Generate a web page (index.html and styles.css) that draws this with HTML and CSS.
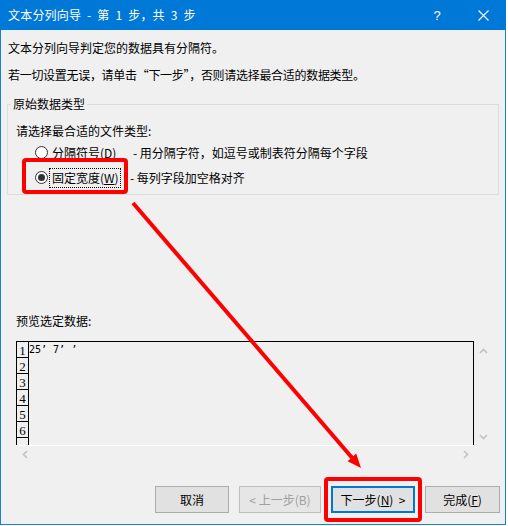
FILE: index.html
```html
<!DOCTYPE html>
<html lang="zh-CN">
<head>
<meta charset="utf-8">
<title>文本分列向导</title>
<link rel="stylesheet" href="styles.css">
</head>
<body>
<div class="window">
  <div class="titlebar">
    <span class="title">文本分列向导 - 第 1 步，共 3 步</span>
    <span class="tb-btn tb-help">?</span>
    <span class="tb-btn tb-close"><svg width="11" height="11" viewBox="0 0 11 11"><path d="M0.5 0.5L10.5 10.5M10.5 0.5L0.5 10.5" stroke="#fff" stroke-width="1.1" fill="none"/></svg></span>
  </div>
  <div class="content">
    <p class="line l1">文本分列向导判定您的数据具有分隔符。</p>
    <p class="line l2">若一切设置无误，请单击“下一步”，否则请选择最合适的数据类型。</p>
    <fieldset class="group">
      <legend>原始数据类型</legend>
      <div class="prompt">请选择最合适的文件类型:</div>
      <div class="radio-row">
        <span class="radio"></span>
        <span class="rlabel r1">分隔符号(D)</span>
        <span class="desc">- 用分隔字符，如逗号或制表符分隔每个字段</span>
      </div>
      <div class="radio-row">
        <span class="radio checked"></span>
        <span class="rlabel r2">固定宽度(<u>W</u>)</span>
        <span class="desc d2">- 每列字段加空格对齐</span>
      </div>
    </fieldset>
    <div class="preview-label">预览选定数据:</div>
    <div class="preview">
      <div class="data">
        <div class="row"><span class="num">1</span><span class="cell">25’ 7’ ’</span></div>
        <div class="row"><span class="num">2</span><span class="cell"></span></div>
        <div class="row"><span class="num">3</span><span class="cell"></span></div>
        <div class="row"><span class="num">4</span><span class="cell"></span></div>
        <div class="row"><span class="num">5</span><span class="cell"></span></div>
        <div class="row"><span class="num">6</span><span class="cell"></span></div>
        <div class="row"><span class="num"></span><span class="cell"></span></div>
      </div>
      <div class="vscroll">
        <svg width="9" height="6" viewBox="0 0 9 6"><path d="M1 5L4.5 1.5L8 5" stroke="#c2c2c2" stroke-width="1.6" fill="none"/></svg>
        <svg width="9" height="6" viewBox="0 0 9 6"><path d="M1 1L4.5 4.5L8 1" stroke="#c2c2c2" stroke-width="1.6" fill="none"/></svg>
      </div>
      <div class="hscroll">
        <svg width="6" height="9" viewBox="0 0 6 9"><path d="M5 1L1.5 4.5L5 8" stroke="#c2c2c2" stroke-width="1.6" fill="none"/></svg>
        <svg width="6" height="9" viewBox="0 0 6 9"><path d="M1 1L4.5 4.5L1 8" stroke="#c2c2c2" stroke-width="1.6" fill="none"/></svg>
      </div>
      <div class="corner"></div>
    </div>
    <div class="buttons">
      <button class="btn b-cancel">取消</button>
      <button class="btn b-prev" disabled>&lt; 上一步(B)</button>
      <button class="btn b-next default">下一步(<u>N</u>)&nbsp; &gt;</button>
      <button class="btn b-finish">完成(<u>F</u>)</button>
    </div>
  </div>
  <svg class="annot" width="508" height="526" viewBox="0 0 508 526">
    <rect x="24" y="160" width="102" height="32" rx="2" fill="none" stroke="#f00" stroke-width="4"/>
    <rect x="326" y="479" width="94" height="41" rx="2" fill="none" stroke="#f00" stroke-width="4"/>
    <line x1="133" y1="203" x2="354" y2="460" stroke="#f00" stroke-width="4"/>
    <polygon points="361,468 347.6,461.2 356.2,453.6" fill="#f00"/>
  </svg>
</div>
</body>
</html>
```

FILE: styles.css
```css
* { box-sizing: border-box; }
html, body { margin: 0; padding: 0; background: #ffffff; }
body {
  width: 508px;
  height: 526px;
  font-family: "Noto Sans CJK SC", "Microsoft YaHei", sans-serif;
  font-size: 12px;
  color: #000;
}
.window {
  position: relative;
  width: 506px;
  height: 525px;
  background: #f0f0f0;
  border: 1px solid #1a7fd4;
  border-top: none;
}
.titlebar {
  height: 30px;
  margin: 0 -1px;
  background: #0078d7;
  color: #fff;
  display: flex;
  align-items: center;
  padding-left: 8px;
}
.title { flex: 1; line-height: 16px; font-size: 12px; word-spacing: 3px; letter-spacing: 0.2px; }
.tb-btn {
  width: 46px;
  height: 30px;
  display: flex;
  align-items: center;
  justify-content: center;
}
.tb-help { font-family: "Liberation Sans", sans-serif; font-size: 13px; }
.tb-close svg { display: block; }

.content { display: flex; flex-direction: column; }
.line { margin: 0; padding-left: 7px; line-height: 16px; height: 16px; white-space: nowrap; }
.l1 { margin-top: 10px; }
.l2 { margin-top: 11px; letter-spacing: -0.3px; }

.group {
  margin: 13px 6px 0 6px;
  padding: 0 0 4px 0;
  border: 1px solid #dcdcdc;
  min-width: 0;
}
.group legend {
  margin-left: 3px;
  padding: 0 2px;
  line-height: 16px;
  height: 16px;
}
.prompt { margin-top: 11px; padding-left: 8px; line-height: 16px; height: 16px; }
.radio-row {
  height: 25px;
  display: flex;
  align-items: center;
  padding-left: 27px;
  white-space: nowrap;
}
.prompt + .radio-row { margin-top: 1px; }
.radio {
  width: 13px;
  height: 13px;
  border: 1px solid #333;
  border-radius: 50%;
  background: #fff;
  display: flex;
  align-items: center;
  justify-content: center;
  flex: none;
}
.radio.checked::after {
  content: "";
  width: 7px;
  height: 7px;
  border-radius: 50%;
  background: #333;
}
.rlabel { line-height: 16px; }
.r1 { margin-left: 4px; width: 81px; }
.r2 {
  margin-left: 2px;
  padding: 1px 2px;
  outline: 1px dotted #000;
  outline-offset: 0;
  width: 70px;
}
.desc { line-height: 16px; }
.d2 { margin-left: 10px; }

.preview-label { margin-top: 118px; padding-left: 15px; line-height: 16px; height: 16px; }
.preview {
  margin-top: 12px;
  margin-left: 15px;
  width: 481px;
  height: 121px;
  display: grid;
  grid-template-columns: 458px 23px;
  grid-template-rows: 104px 17px;
}
.data {
  border: 1px solid #000;
  border-bottom: none;
  overflow: hidden;
  display: flex;
  flex-direction: column;
}
.row { display: flex; height: 16px; flex: none; }
.num {
  width: 12px;
  height: 16px;
  border-right: 1px solid #000;
  border-bottom: 1px solid #000;
  font-family: "Liberation Serif", serif;
  font-size: 13px;
  line-height: 17px;
  text-align: center;
  flex: none;
}
.cell {
  font-family: "DejaVu Sans Mono", monospace;
  font-size: 10px;
  line-height: 13px;
  padding-top: 1px;
  white-space: pre;
}
.vscroll {
  display: flex;
  flex-direction: column;
  justify-content: space-between;
  align-items: center;
  padding: 7px 5px 5px 0;
}
.vscroll svg, .hscroll svg { display: block; }
.hscroll {
  border-top: 1px solid #fff;
  display: flex;
  justify-content: space-between;
  align-items: center;
  padding: 1px 5px 0 6px;
}

.buttons {
  margin-top: 24px;
  display: flex;
  justify-content: flex-end;
  gap: 10px;
  padding-right: 5px;
}
.btn {
  height: 27px;
  background: #e1e1e1;
  border: 1px solid #adadad;
  font-family: "Noto Sans CJK SC", "Microsoft YaHei", sans-serif;
  font-size: 12px;
  color: #000;
  padding: 0;
  line-height: 16px;
}
.b-cancel { width: 74px; }
.b-prev { width: 82px; color: #a0a0a0; border-color: #bfbfbf; background: #e6e6e6; }
.b-next { width: 84px; border: 2px solid #0078d7; }
.b-finish { width: 75px; }

.annot {
  position: absolute;
  left: -1px;
  top: 0;
  pointer-events: none;
}
```
